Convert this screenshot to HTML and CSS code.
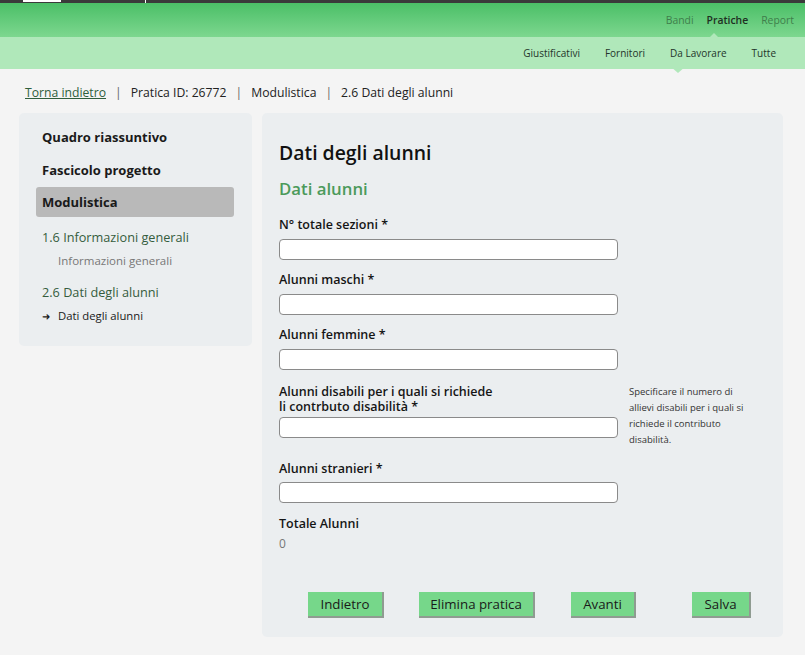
FILE: index.html
```html
<!DOCTYPE html>
<html lang="it">
<head>
<meta charset="utf-8">
<title>Dati degli alunni</title>
<link rel="stylesheet" href="styles.css">
</head>
<body>
<div class="topbar">
  <span class="tb-white"></span>
  <span class="tb-line"></span>
</div>
<header class="header">
  <nav class="mainnav">
    <a class="nav-item">Bandi</a>
    <a class="nav-item active">Pratiche</a>
    <a class="nav-item">Report</a>
  </nav>
</header>
<div class="subnav">
  <nav class="subnav-list">
    <a class="sub-item">Giustificativi</a>
    <a class="sub-item">Fornitori</a>
    <a class="sub-item active">Da Lavorare</a>
    <a class="sub-item">Tutte</a>
  </nav>
</div>
<div class="content">
  <div class="breadcrumb">
    <a class="back">Torna indietro</a><span class="sep">|</span><span>Pratica ID: 26772</span><span class="sep">|</span><span>Modulistica</span><span class="sep">|</span><span>2.6 Dati degli alunni</span>
  </div>
  <div class="layout">
    <aside class="sidebar">
      <div class="side-title">Quadro riassuntivo</div>
      <div class="side-title">Fascicolo progetto</div>
      <div class="side-title selected">Modulistica</div>
      <div class="side-section">1.6 Informazioni generali</div>
      <div class="side-sub">Informazioni generali</div>
      <div class="side-section second">2.6 Dati degli alunni</div>
      <div class="side-sub current"><span class="arrow">&#10140;</span>Dati degli alunni</div>
    </aside>
    <main class="main">
      <h1 class="title">Dati degli alunni</h1>
      <h2 class="subtitle">Dati alunni</h2>
      <div class="field first">
        <label class="label">N° totale sezioni *</label>
        <input class="input" type="text">
      </div>
      <div class="field">
        <label class="label">Alunni maschi *</label>
        <input class="input" type="text">
      </div>
      <div class="field">
        <label class="label">Alunni femmine *</label>
        <input class="input" type="text">
      </div>
      <div class="field with-hint">
        <div class="field-main">
          <label class="label tight">Alunni disabili per i quali si richiede<br>li contrbuto disabilità *</label>
          <input class="input" type="text">
        </div>
        <p class="hint">Specificare il numero di allievi disabili per i quali si richiede il contributo disabilità.</p>
      </div>
      <div class="field after-hint">
        <label class="label short">Alunni stranieri *</label>
        <input class="input" type="text">
      </div>
      <div class="field total">
        <div class="label">Totale Alunni</div>
        <div class="value">0</div>
      </div>
      <div class="buttons">
        <button class="btn b1">Indietro</button>
        <button class="btn b2">Elimina pratica</button>
        <button class="btn b3">Avanti</button>
        <button class="btn b4">Salva</button>
      </div>
    </main>
  </div>
</div>
</body>
</html>
```
FILE: styles.css
```css
* { box-sizing: border-box; }
html, body { margin: 0; padding: 0; }
body {
  background: #f4f4f4;
  font-family: "Open Sans", "Noto Sans", sans-serif;
  color: #1a1a1a;
  overflow: hidden;
}
.topbar {
  height: 3px;
  background: #3a3a3a;
  position: relative;
}
.tb-white {
  position: absolute;
  left: 23px;
  top: 0;
  width: 38px;
  height: 2px;
  background: #fff;
}
.tb-line {
  position: absolute;
  left: 145px;
  top: 0;
  width: 1px;
  height: 3px;
  background: #fff;
}
.header {
  height: 34px;
  background: linear-gradient(#4bbf67, #7dd78f);
  display: flex;
  justify-content: flex-end;
  align-items: center;
}
.mainnav {
  display: flex;
  gap: 13px;
  padding-right: 11px;
  font-size: 10.4px;
}
.nav-item { color: #3f7e4b; position: relative; }
.nav-item.active { color: #1e2e22; font-weight: 600; }
.nav-item.active::after {
  content: "";
  position: absolute;
  left: 0;
  top: 20px;
  border: 7px solid transparent;
  border-bottom-color: #b0e8ba;
  border-top: 0;
}
.subnav {
  height: 32px;
  background: #b0e8ba;
  display: flex;
  justify-content: flex-end;
  align-items: center;
}
.subnav-list {
  display: flex;
  gap: 25px;
  padding-right: 29px;
  font-size: 10px;
}
.sub-item { color: #24352a; position: relative; }
.sub-item.active::after {
  content: "";
  position: absolute;
  left: 0;
  top: 20px;
  border: 8px solid transparent;
  border-top: 7px solid #b0e8ba;
  border-bottom: 0;
}
.content { padding: 0 22px 0 19px; }
.breadcrumb {
  margin-top: 16px;
  padding-left: 6px;
  font-size: 12.2px;
  line-height: 16px;
  color: #222;
  white-space: nowrap;
}
.back { color: #2f5e3c; text-decoration: underline; }
.sep { color: #666; margin: 0 9px; }
.layout {
  display: flex;
  gap: 10px;
  margin-top: 12px;
  align-items: flex-start;
}
.sidebar {
  width: 233px;
  background: #ebeef0;
  border-radius: 5px;
  padding: 14px 18px 22px 17px;
}
.side-title {
  font-size: 13px;
  font-weight: 700;
  line-height: 20px;
  padding: 0 6px;
  margin-bottom: 13px;
  color: #1a1a1a;
}
.side-title.selected {
  background: #b9b9b9;
  border-radius: 3px;
  line-height: 30px;
  margin: -6px 0 10px 0;
}
.side-section {
  font-size: 12.7px;
  line-height: 20px;
  color: #355c3d;
  padding-left: 6px;
}
.side-section.second { margin-top: 13px; }
.side-sub {
  font-size: 11.5px;
  line-height: 16px;
  color: #777;
  padding-left: 22px;
  margin-top: 6px;
}
.side-sub.current { color: #1a1a1a; padding-left: 6px; font-size: 11.3px; }
.arrow { display: inline-block; width: 16px; font-size: 10px; }
.main {
  flex: 1;
  height: 524px;
  background: #ebeef0;
  border-radius: 5px;
  padding: 27px 16px 0 17px;
}
.title {
  margin: 0;
  font-size: 19.4px;
  font-weight: 600;
  line-height: 26px;
  color: #111;
}
.subtitle {
  margin: 12px 0 0 0;
  font-size: 16.8px;
  font-weight: 600;
  line-height: 22px;
  color: #4c9a5b;
}
.field { margin-top: 12px; }
.field.first { margin-top: 17px; }
.label {
  display: block;
  font-size: 12.5px;
  font-weight: 600;
  line-height: 16px;
  color: #151515;
  margin-bottom: 6px;
  white-space: nowrap;
}
.label.tight { line-height: 15px; margin-bottom: 3px; }
.label.short { margin-bottom: 5px; }
.input {
  display: block;
  width: 339px;
  height: 21px;
  border: 1px solid #8a8a8a;
  border-radius: 4px;
  background: #fff;
  margin: 0;
}
.field.with-hint {
  display: flex;
  gap: 11px;
  align-items: flex-start;
  margin-top: 14px;
}
.hint {
  margin: 0;
  width: 128px;
  font-size: 9.5px;
  line-height: 16px;
  color: #333;
}
.field.after-hint { margin-top: 13px; }
.field.total { margin-top: 13px; }
.total .label { margin-bottom: 4px; }
.value { font-size: 12px; color: #777; line-height: 16px; }
.buttons {
  display: flex;
  margin-top: 40px;
  padding-left: 29px;
}
.btn {
  height: 26px;
  background: #76d78a;
  border: 0;
  border-right: 2px solid #8f9b91;
  border-bottom: 2px solid #8f9b91;
  font-family: inherit;
  font-size: 13.3px;
  color: #1a1a1a;
  padding: 0;
  white-space: nowrap;
  text-align: center;
}
.b1 { width: 76px; }
.b2 { width: 116px; margin-left: 35px; }
.b3 { width: 65px; margin-left: 36px; }
.b4 { width: 59px; margin-left: 56px; }
```
